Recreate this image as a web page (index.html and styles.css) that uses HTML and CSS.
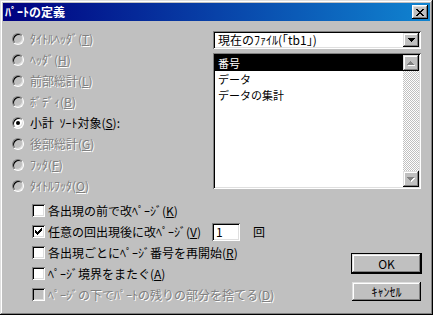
FILE: index.html
```html
<!DOCTYPE html>
<html lang="ja">
<head>
    <meta charset="UTF-8">
    <title>ﾊﾟｰﾄの定義</title>
    <link rel="stylesheet" href="styles.css">
</head>
<body>
    <div class="window">
        <div class="titlebar">
            <span class="title">ﾊﾟｰﾄの定義</span>
            <span class="close">
                <svg width="8" height="7" viewBox="0 0 8 7" shape-rendering="crispEdges">
                    <path d="M0 0h2v1h-2zM6 0h2v1h-2zM1 1h2v1h-2zM5 1h2v1h-2zM2 2h4v1h-4zM3 3h2v1h-2zM2 4h4v1h-4zM1 5h2v1h-2zM5 5h2v1h-2zM0 6h2v1h-2zM6 6h2v1h-2z" fill="#000"/>
                </svg>
            </span>
        </div>

        <div class="body">
            <div class="top">
                <div class="radios">
                    <div class="radio-row off"><span class="radio"></span><span>ﾀｲﾄﾙﾍｯﾀﾞ(<u>T</u>)</span></div>
                    <div class="radio-row off"><span class="radio"></span><span>ﾍｯﾀﾞ(<u>H</u>)</span></div>
                    <div class="radio-row off"><span class="radio"></span><span>前部総計(<u>L</u>)</span></div>
                    <div class="radio-row off"><span class="radio"></span><span>ﾎﾞﾃﾞｨ(<u>B</u>)</span></div>
                    <div class="radio-row"><span class="radio on"></span><span>小計&nbsp;&nbsp;ｿｰﾄ対象(<u>S</u>):</span></div>
                    <div class="radio-row off"><span class="radio"></span><span>後部総計(<u>G</u>)</span></div>
                    <div class="radio-row off"><span class="radio"></span><span>ﾌｯﾀ(<u>F</u>)</span></div>
                    <div class="radio-row off"><span class="radio"></span><span>ﾀｲﾄﾙﾌｯﾀ(<u>O</u>)</span></div>
                </div>

                <div class="side">
                    <div class="combo">
                        <span class="combo-text">現在のﾌｧｲﾙ(｢tb1｣)</span>
                        <span class="raised combo-btn">
                            <svg width="7" height="4" viewBox="0 0 7 4" shape-rendering="crispEdges">
                                <path d="M0 0h7v1h-7zM1 1h5v1h-5zM2 2h3v1h-3zM3 3h1v1h-1z" fill="#000"/>
                            </svg>
                        </span>
                    </div>
                    <div class="listbox">
                        <ul class="items">
                            <li class="sel">番号</li>
                            <li>データ</li>
                            <li>データの集計</li>
                        </ul>
                        <div class="scrollbar">
                            <span class="raised sb-btn">
                                <svg width="8" height="5" viewBox="0 0 8 5" shape-rendering="crispEdges">
                                    <path d="M4 1h1v1h-1zM3 2h3v1h-3zM2 3h5v1h-5zM1 4h7v1h-7z" fill="#fff"/>
                                    <path d="M3 0h1v1h-1zM2 1h3v1h-3zM1 2h5v1h-5zM0 3h7v1h-7z" fill="#808080"/>
                                </svg>
                            </span>
                            <span class="raised sb-btn">
                                <svg width="8" height="5" viewBox="0 0 8 5" shape-rendering="crispEdges">
                                    <path d="M1 1h7v1h-7zM2 2h5v1h-5zM3 3h3v1h-3zM4 4h1v1h-1z" fill="#fff"/>
                                    <path d="M0 0h7v1h-7zM1 1h5v1h-5zM2 2h3v1h-3zM3 3h1v1h-1z" fill="#808080"/>
                                </svg>
                            </span>
                        </div>
                    </div>
                </div>
            </div>

            <div class="bottom">
                <div class="checks">
                    <div class="check-row"><span class="check"></span><span>各出現の前で改ﾍﾟｰｼﾞ(<u>K</u>)</span></div>
                    <div class="check-row">
                        <span class="check">
                            <svg width="7" height="7" viewBox="0 0 7 7" shape-rendering="crispEdges">
                                <path d="M6 0h1v3h-1zM5 1h1v3h-1zM4 2h1v3h-1zM3 3h1v3h-1zM2 4h1v3h-1zM1 3h1v3h-1zM0 2h1v3h-1z" fill="#000"/>
                            </svg>
                        </span>
                        <span class="fixed-label">任意の回出現後に改ﾍﾟｰｼﾞ(<u>V</u>)</span>
                        <span class="count">1</span>
                        <span class="unit">回</span>
                    </div>
                    <div class="check-row"><span class="check"></span><span>各出現ごとにﾍﾟｰｼﾞ番号を再開始(<u>R</u>)</span></div>
                    <div class="check-row"><span class="check"></span><span>ﾍﾟｰｼﾞ境界をまたぐ(<u>A</u>)</span></div>
                    <div class="check-row off"><span class="check"></span><span>ﾍﾟｰｼﾞの下でﾊﾟｰﾄの残りの部分を捨てる(<u>D</u>)</span></div>
                </div>
                <div class="buttons">
                    <div class="btn-default"><span class="raised btn">OK</span></div>
                    <span class="raised btn cancel">ｷｬﾝｾﾙ</span>
                </div>
            </div>
        </div>
    </div>
</body>
</html>
```

FILE: styles.css
```css
body {
    margin: 0;
    font-family: "Noto Sans CJK JP", "DejaVu Sans", sans-serif;
    font-size: 12px;
    color: #000;
}

.window {
    width: 433px;
    height: 315px;
    box-sizing: border-box;
    padding: 3px;
    background: #c0c0c0;
    box-shadow: inset -1px -1px #000, inset 1px 1px #dfdfdf,
                inset -2px -2px #808080, inset 2px 2px #fff;
}

.titlebar {
    height: 18px;
    display: flex;
    align-items: center;
    justify-content: space-between;
    padding: 0 2px 0 2px;
    background: linear-gradient(90deg, #000080, #1084d0);
    color: #fff;
    font-weight: bold;
}

.title {
    line-height: 18px;
}

.close {
    width: 16px;
    height: 14px;
    display: flex;
    align-items: center;
    justify-content: center;
    background: #c0c0c0;
    box-shadow: inset -1px -1px #000, inset 1px 1px #fff,
                inset -2px -2px #808080, inset 2px 2px #dfdfdf;
}

.raised {
    background: #c0c0c0;
    box-shadow: inset -1px -1px #000, inset 1px 1px #dfdfdf,
                inset -2px -2px #808080, inset 2px 2px #fff;
}

.body {
    padding: 7px 0 0 9px;
}

.top {
    display: flex;
    height: 168px;
}

.radios {
    width: 201px;
}

.radio-row,
.check-row {
    height: 21px;
    display: flex;
    align-items: center;
    white-space: nowrap;
}

.off {
    color: #808080;
    text-shadow: 1px 1px 0 #fff;
}

.radio {
    width: 12px;
    height: 12px;
    box-sizing: border-box;
    margin-right: 6px;
    border-radius: 50%;
    border: 1px solid;
    border-color: #808080 #fff #fff #808080;
    box-shadow: inset 1px 1px #000, inset -1px -1px #dfdfdf;
    background: #fff;
    display: flex;
    align-items: center;
    justify-content: center;
}

.off .radio {
    background: #c0c0c0;
}

.radio.on::after {
    content: "";
    width: 4px;
    height: 4px;
    border-radius: 50%;
    background: #000;
}

.side {
    width: 208px;
    padding-top: 3px;
}

.combo {
    height: 18px;
    box-sizing: border-box;
    padding: 2px;
    display: flex;
    background: #fff;
    box-shadow: inset 1px 1px #808080, inset -1px -1px #fff,
                inset 2px 2px #000, inset -2px -2px #dfdfdf;
}

.combo-text {
    flex: 1;
    padding-left: 3px;
    line-height: 14px;
    white-space: nowrap;
}

.combo-btn {
    width: 16px;
    height: 14px;
    display: flex;
    align-items: center;
    justify-content: center;
}

.listbox {
    margin-top: 4px;
    height: 136px;
    box-sizing: border-box;
    padding: 2px;
    display: flex;
    background: #fff;
    box-shadow: inset 1px 1px #808080, inset -1px -1px #fff,
                inset 2px 2px #000, inset -2px -2px #dfdfdf;
}

.items {
    flex: 1;
    list-style: none;
    margin: 0;
    padding: 0;
    font-size: 11px;
}

.items li {
    height: 16px;
    line-height: 16px;
    padding-left: 3px;
    white-space: nowrap;
}

.items li.sel {
    background: #000;
    color: #fff;
}

.scrollbar {
    width: 16px;
    display: flex;
    flex-direction: column;
    justify-content: space-between;
    background: repeating-conic-gradient(#fff 0 25%, #c0c0c0 0 50%) 0 0 / 2px 2px;
}

.sb-btn {
    width: 16px;
    height: 16px;
    display: flex;
    align-items: center;
    justify-content: center;
}

.bottom {
    display: flex;
    margin-top: 4px;
}

.checks {
    flex: 1;
    padding-left: 20px;
}

.check {
    width: 13px;
    height: 13px;
    box-sizing: border-box;
    margin-right: 3px;
    display: flex;
    align-items: center;
    justify-content: center;
    background: #fff;
    box-shadow: inset 1px 1px #808080, inset -1px -1px #fff,
                inset 2px 2px #000, inset -2px -2px #dfdfdf;
}

.off .check {
    background: #c0c0c0;
}

.fixed-label {
    width: 164px;
}

.count {
    width: 28px;
    height: 18px;
    box-sizing: border-box;
    padding: 1px 0 0 4px;
    line-height: 16px;
    background: #fff;
    box-shadow: inset 1px 1px #808080, inset -1px -1px #fff,
                inset 2px 2px #000, inset -2px -2px #dfdfdf;
}

.unit {
    margin-left: 13px;
}

.buttons {
    width: 71px;
    margin-right: 8px;
    padding-top: 53px;
    display: flex;
    flex-direction: column;
    align-items: flex-end;
}

.btn-default {
    border: 1px solid #000;
    width: 69px;
    height: 19px;
}

.btn {
    width: 69px;
    height: 19px;
    display: flex;
    align-items: center;
    justify-content: center;
    line-height: 19px;
}

.cancel {
    margin-top: 8px;
    margin-right: 1px;
}
```
